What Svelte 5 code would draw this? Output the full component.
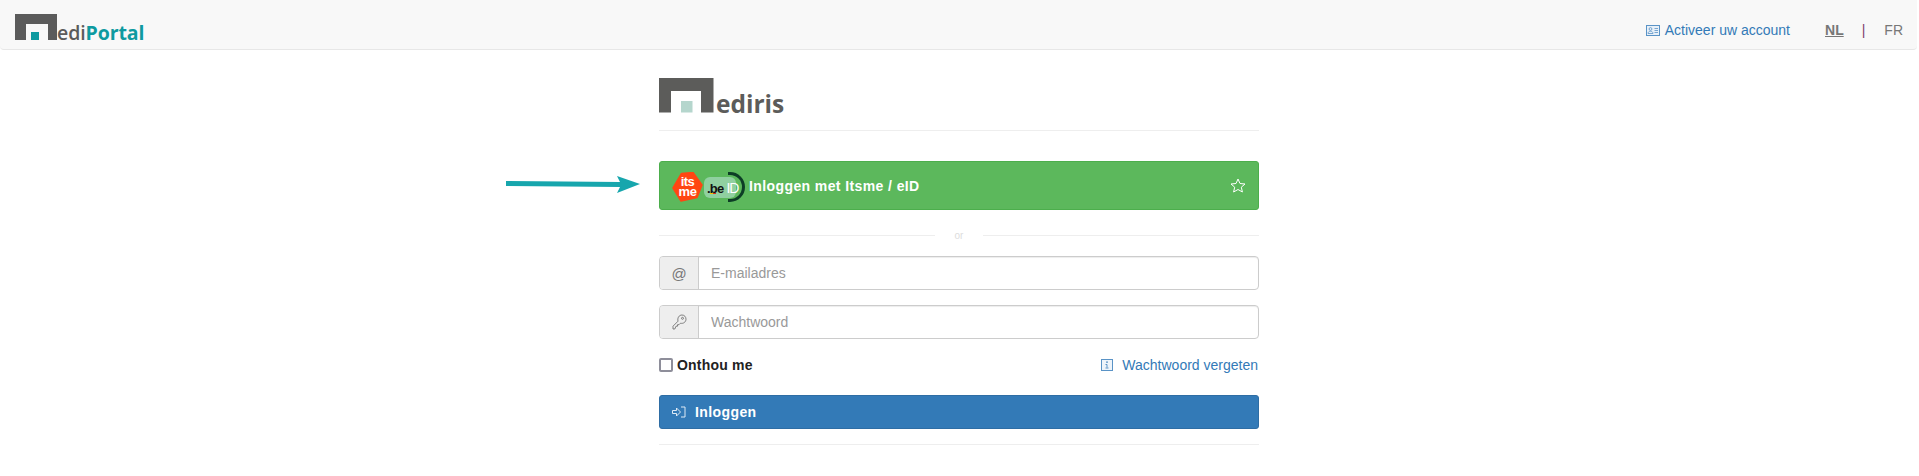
<script>
  const fields = [
    { id: 'mail', icon: 'at', placeholder: 'E-mailadres', type: 'text' },
    { id: 'pass', icon: 'key', placeholder: 'Wachtwoord', type: 'password' }
  ];
</script>

<header class="navbar">
  <a class="brand" href="#home">
    <svg class="brand-mark" width="42" height="26" viewBox="0 0 42 26" aria-hidden="true">
      <path d="M0 0H42V26H33V10H11V26H0Z" fill="#5b5b5b" />
      <rect x="16" y="18" width="8" height="8" fill="#0e9aa0" />
    </svg>
    <span class="brand-text"><span class="medi">edi</span><span class="portal">Portal</span></span>
  </a>
  <nav class="topnav">
    <a class="activate" href="#activate">
      <svg width="14" height="11" viewBox="0 0 14 11" aria-hidden="true">
        <rect x="0.5" y="0.5" width="13" height="10" fill="#e8f0f8" stroke="#5a93c6" />
        <circle cx="4.5" cy="4" r="1.4" fill="none" stroke="#5a93c6" stroke-width="0.8" />
        <path d="M2 8.500c0-3 5-3 5 0zM8.500 3.500h3.500M8.500 5.500h3.500M8.500 7.500h3.500" fill="none" stroke="#5a93c6" stroke-width="0.8" />
      </svg>
      Activeer uw account
    </a>
    <a class="lang active" href="#nl">NL</a>
    <span class="sep">|</span>
    <a class="lang" href="#fr">FR</a>
  </nav>
</header>

<div class="arrow-slot">
  <svg width="134" height="20" viewBox="0 0 134 20" aria-hidden="true">
    <path d="M0 7L114 8L111 2L134 10L111 19L114 13L0 12Z" fill="#17a6ad" />
  </svg>
</div>

<main class="panel">
  <div class="logo">
    <svg width="55" height="35" viewBox="0 0 55 35" aria-hidden="true">
      <path d="M0 0H54.500V34.500H42V13H12V34.500H0Z" fill="#5c5c5a" />
      <rect x="22" y="23" width="11.500" height="11.500" fill="#b5d6cd" />
    </svg>
    <span class="logo-text">ediris</span>
  </div>

  <button class="btn itsme" type="button">
    <svg class="itsme-badge" width="31" height="30" viewBox="0 0 31 30" aria-hidden="true">
      <path d="M9.500 1.500L21 0.500L30 13L25 25.500L9 29L1 16Z" fill="#ff4612" stroke="#ff4612" stroke-width="1.500" stroke-linejoin="round" />
      <text class="itsme-word" x="15.500" y="14" text-anchor="middle">its</text>
      <text class="itsme-word" x="15.500" y="23.500" text-anchor="middle">me</text>
    </svg>
    <span class="beid">
      <span class="bracket"></span>
      <span class="beid-pill"><span class="dotbe">.be</span><span class="id">ID</span><span class="flag"></span></span>
    </span>
    <span class="itsme-label">Inloggen met Itsme / eID</span>
    <svg class="star" width="16" height="15" viewBox="0 0 16 15" aria-hidden="true">
      <path d="M8 1L10 5.500L15 6L11.300 9.200L12.400 14L8 11.500L3.600 14L4.700 9.200L1 6L6 5.500Z" fill="none" stroke="#fff" stroke-width="1" stroke-linejoin="round" />
    </svg>
  </button>

  <div class="divider"><span>or</span></div>

  {#each fields as f (f.id)}
    <div class="input-group">
      <span class="addon">
        {#if f.icon === 'at'}
          <span class="at">@</span>
        {:else}
          <svg width="15" height="16" viewBox="0 0 15 16" aria-hidden="true">
            <path d="M1 15V12.200L6 7.200C5.200 4 7 1 10 1C12.500 1 14 3 14 5.200C14 8 11.200 10 8.500 9.200L7 10.700H5.500V12.200H4L2.800 15Z" fill="none" stroke="#666" stroke-width="0.800" stroke-linejoin="round" />
            <circle cx="10.500" cy="4.300" r="1" fill="none" stroke="#666" stroke-width="0.800" />
          </svg>
        {/if}
      </span>
      <input type={f.type} placeholder={f.placeholder} aria-label={f.placeholder} />
    </div>
  {/each}

  <div class="options">
    <label class="remember"><span class="box"></span>Onthou me</label>
    <a class="forgot" href="#forgot">
      <svg width="12" height="12" viewBox="0 0 12 12" aria-hidden="true">
        <rect x="0.500" y="0.500" width="11" height="11" fill="#eef4fa" stroke="#5a93c6" />
        <path d="M5 3h2M6 3v1M4.500 5.500h1.500v3M4.500 9h3" fill="none" stroke="#5a93c6" />
      </svg>
      Wachtwoord vergeten
    </a>
  </div>

  <button class="btn submit" type="button">
    <svg width="14" height="12" viewBox="0 0 14 12" aria-hidden="true">
      <path d="M0.500 4.500H4.500V2L8.500 6L4.500 10V7.500H0.500ZM9 1H13V11H9" fill="none" stroke="#dfeaf5" stroke-width="1" />
    </svg>
    Inloggen
  </button>

  <hr class="rule" />
</main>

<style>
  :global(body) {
    margin: 0;
    background: #fff;
    font-family: "Liberation Sans", Arial, sans-serif;
    font-size: 14px;
    color: #333;
    overflow: hidden;
  }
  a {
    text-decoration: none;
  }
  .navbar {
    box-sizing: border-box;
    height: 50px;
    margin-right: 2px;
    padding-right: 14px;
    display: flex;
    align-items: flex-end;
    justify-content: space-between;
    background: #f8f8f8;
    border-bottom: 1px solid #e7e7e7;
    border-radius: 0 0 4px 4px;
  }
  .brand {
    display: flex;
    align-items: flex-end;
    gap: 0;
    margin: 0 0 9px 15px;
  }
  .brand-text {
    font-family: "Open Sans", sans-serif;
    font-weight: 600;
    font-size: 19.500px;
    line-height: 20px;
    margin-bottom: -3px;
    letter-spacing: -0.1px;
  }
  .medi {
    color: #5b5b5b;
  }
  .portal {
    color: #0e9aa0;
    font-weight: 700;
  }
  .topnav {
    display: flex;
    align-items: center;
    height: 20px;
    margin-bottom: 9px;
    color: #777;
  }
  .activate {
    display: flex;
    align-items: center;
    gap: 5px;
    color: #337ab7;
  }
  .lang {
    color: #777;
  }
  .lang.active {
    margin-left: 35px;
    font-weight: 700;
    text-decoration: underline;
  }
  .sep {
    margin: 0 19px 0 18px;
    color: #7d3f6b;
  }
  .arrow-slot {
    position: absolute;
    left: 506px;
    top: 174px;
    line-height: 0;
  }
  .panel {
    box-sizing: border-box;
    width: 600px;
    margin: 28px 0 0 659px;
  }
  .logo {
    display: flex;
    align-items: flex-end;
    gap: 2px;
    padding-bottom: 17px;
    border-bottom: 1px solid #eee;
  }
  .logo-text {
    font-family: "Open Sans", sans-serif;
    font-weight: 700;
    font-size: 24.500px;
    line-height: 25px;
    margin-bottom: -3px;
    color: #5c5c5a;
  }
  .btn {
    box-sizing: border-box;
    width: 100%;
    display: flex;
    align-items: center;
    font-family: inherit;
    font-size: 14px;
    font-weight: 700;
    letter-spacing: 0.4px;
    color: #fff;
    border-radius: 3px;
    cursor: pointer;
  }
  .itsme {
    height: 49px;
    margin-top: 30px;
    padding: 0 13px 0 12px;
    background: #5cb85c;
    border: 1px solid #4cae4c;
  }
  .itsme-badge {
    flex: none;
    margin-top: 3px;
  }
  .itsme-word {
    font-family: "Liberation Sans", sans-serif;
    font-size: 13px;
    font-weight: 700;
    letter-spacing: -0.5px;
    fill: #fff;
  }
  .beid {
    position: relative;
    flex: none;
    display: flex;
    align-items: center;
    width: 42px;
    height: 30px;
    margin: 3px 0 0 1px;
  }
  .beid-pill {
    position: relative;
    display: flex;
    align-items: baseline;
    box-sizing: border-box;
    width: 32px;
    height: 21px;
    padding: 3px 0 0 3px;
    background: #90d0a0;
    border-radius: 6px;
    font-size: 13px;
    line-height: 16px;
    letter-spacing: 0;
  }
  .dotbe {
    color: #111;
    letter-spacing: -0.8px;
  }
  .id {
    color: #fff;
    font-weight: 400;
    font-size: 14px;
    letter-spacing: -1px;
    margin-left: 3px;
  }
  .flag {
    position: absolute;
    left: 6px;
    top: 16px;
    width: 6px;
    height: 1px;
    background: linear-gradient(90deg, #f5c400 50%, #d8301f 50%);
  }
  .bracket {
    position: absolute;
    left: 24px;
    top: 0;
    width: 17px;
    height: 30px;
    box-sizing: border-box;
    border: 3px solid #0d3d26;
    border-left: 0;
    border-radius: 0 15px 15px 0;
  }
  .itsme-label {
    flex: 1;
    text-align: left;
    margin-left: 3px;
  }
  .star {
    flex: none;
    margin-right: -1px;
  }
  .divider {
    height: 1px;
    margin: 25px 0 20px;
    background: #eee;
    display: flex;
    justify-content: center;
    align-items: center;
  }
  .divider span {
    padding: 0 20px;
    background: #fff;
    font-size: 10px;
    line-height: 10px;
    color: #ddd;
  }
  .input-group {
    display: flex;
    box-sizing: border-box;
    height: 34px;
    margin-bottom: 15px;
    border: 1px solid #ccc;
    border-radius: 4px;
    overflow: hidden;
    box-shadow: inset 0 1px 1px rgba(0, 0, 0, 0.075);
  }
  .addon {
    flex: none;
    box-sizing: border-box;
    width: 39px;
    display: flex;
    align-items: center;
    justify-content: center;
    background: #eee;
    border-right: 1px solid #ccc;
    color: #777;
  }
  .at {
    font-size: 15px;
    font-weight: 400;
  }
  input {
    flex: 1;
    min-width: 0;
    border: 0;
    outline: 0;
    padding: 0 12px;
    background: transparent;
    font-family: inherit;
    font-size: 14px;
    color: #555;
  }
  input::placeholder {
    color: #999;
    opacity: 1;
  }
  .options {
    display: flex;
    justify-content: space-between;
    align-items: center;
    height: 20px;
    margin: 16px 0 20px;
  }
  .remember {
    display: flex;
    align-items: center;
    gap: 4px;
    font-weight: 700;
    letter-spacing: 0.2px;
    color: #222;
  }
  .box {
    box-sizing: border-box;
    width: 14px;
    height: 14px;
    background: #fff;
    border: 2px solid #8e8e9a;
    border-radius: 2px;
  }
  .forgot {
    display: flex;
    align-items: center;
    gap: 9px;
    color: #337ab7;
    margin-right: 1px;
  }
  .submit {
    gap: 9px;
    height: 34px;
    padding: 0 12px;
    background: #337ab7;
    border: 1px solid #2e6da4;
  }
  .rule {
    margin: 15px 0 0;
    border: 0;
    border-top: 1px solid #eee;
  }
</style>
